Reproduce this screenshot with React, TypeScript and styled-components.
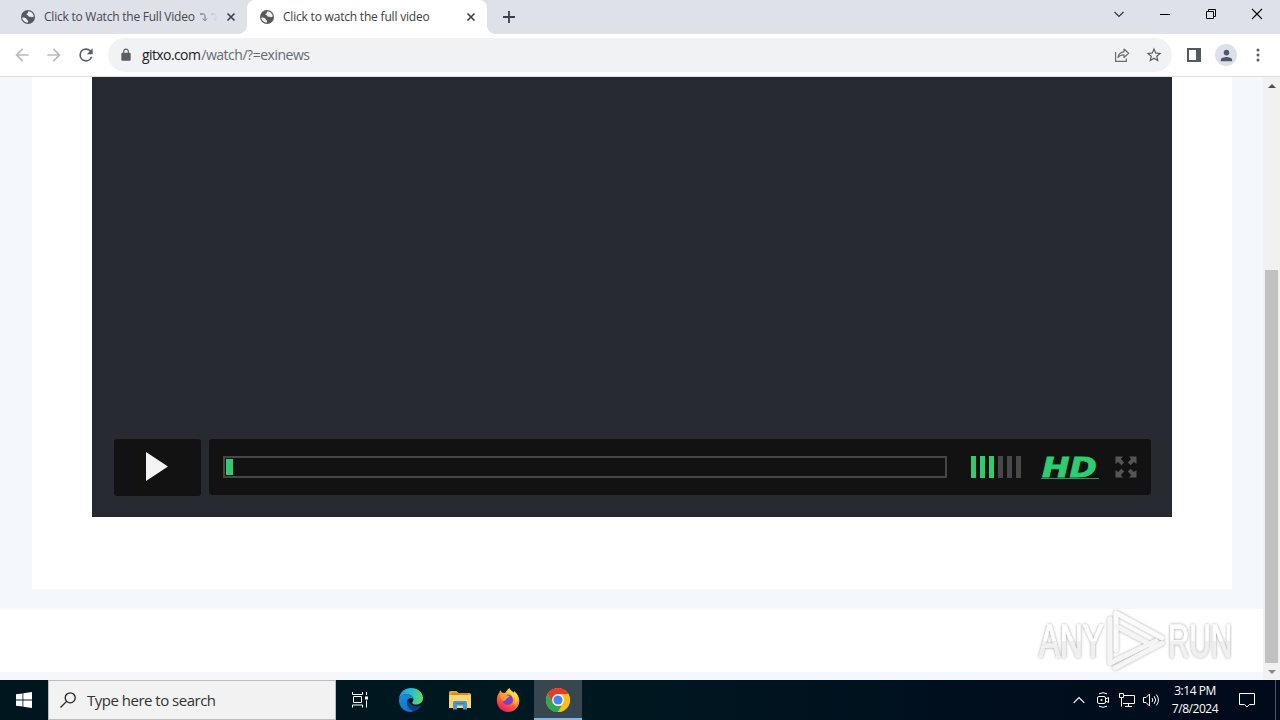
import React from 'react';
import styled, { createGlobalStyle, css } from 'styled-components';

const ui = `"Open Sans", "Noto Sans", sans-serif`;

const GlobalStyle = createGlobalStyle`
  * {
    box-sizing: border-box;
  }
  body {
    margin: 0;
    overflow: hidden;
    background: #ffffff;
    font-family: ${ui};
  }
  svg {
    display: block;
    flex: none;
    overflow: visible;
  }
`;

const Screen = styled.div`
  position: relative;
  display: flex;
  flex-direction: column;
  width: 1280px;
  height: 720px;
  overflow: hidden;
`;

/* Browser chrome */

const TabStrip = styled.div`
  display: flex;
  height: 34px;
  padding-left: 8px;
  background: #dee1e8;
`;

const TabItem = styled.div<{ $active?: boolean }>`
  position: relative;
  display: flex;
  align-items: center;
  width: ${({ $active }) => ($active ? 240 : 239)}px;
  padding: 0 10px 0 12px;
  border-radius: 8px 8px 0 0;
  ${({ $active }) =>
    $active &&
    css`
      background: #ffffff;
      &::before,
      &::after {
        content: '';
        position: absolute;
        bottom: 0;
        width: 8px;
        height: 8px;
      }
      &::before {
        left: -8px;
        background: radial-gradient(circle at 0 0, transparent 7.5px, #ffffff 8px);
      }
      &::after {
        right: -8px;
        background: radial-gradient(circle at 100% 0, transparent 7.5px, #ffffff 8px);
      }
    `}
`;

const TabTitle = styled.div<{ $spacing: number; $color: string }>`
  flex: 1;
  height: 18px;
  margin-left: 8px;
  white-space: nowrap;
  font-size: 12px;
  line-height: 18px;
  letter-spacing: ${({ $spacing }) => $spacing}px;
  color: ${({ $color }) => $color};
`;

const Faded = styled.span`
  display: inline-flex;
  gap: 3px;
  margin-left: 5px;
  vertical-align: -1px;
  -webkit-mask-image: linear-gradient(90deg, #000, rgba(0, 0, 0, 0.4) 55%, transparent 90%);
  mask-image: linear-gradient(90deg, #000, rgba(0, 0, 0, 0.4) 55%, transparent 90%);
`;

const NewTab = styled.div`
  display: flex;
  align-items: center;
  justify-content: center;
  width: 28px;
  margin-left: 8px;
`;

const WindowControls = styled.div`
  display: flex;
  align-items: center;
  margin-left: auto;
  padding-bottom: 6px;
`;

const WindowButton = styled.div`
  display: flex;
  justify-content: center;
  width: 46px;
`;

const Toolbar = styled.div`
  display: flex;
  align-items: center;
  height: 43px;
  padding: 0 6px;
  border-bottom: 1px solid #dcdee0;
  background: #ffffff;
`;

const ToolButton = styled.div`
  display: flex;
  align-items: center;
  justify-content: center;
  width: 32px;
  height: 32px;
`;

const Omnibox = styled.div`
  display: flex;
  flex: 1;
  align-items: center;
  height: 34px;
  margin: 0 6px;
  padding: 0 2px 0 11px;
  border-radius: 17px;
  background: #f0f2f4;
`;

const Url = styled.div`
  flex: 1;
  margin-left: 9px;
  font-size: 14px;
  line-height: 20px;
  letter-spacing: -0.48px;
  color: #666a70;
`;

const Host = styled.span`
  margin-right: 1px;
  letter-spacing: -0.6px;
  color: #202124;
`;

const Avatar = styled.div`
  display: flex;
  align-items: center;
  justify-content: center;
  width: 22px;
  height: 22px;
  border-radius: 50%;
  background: #dde0e9;
`;

/* Page */

const Viewport = styled.div`
  display: flex;
  flex: 1;
  min-height: 0;
`;

const Page = styled.div`
  display: flex;
  flex: 1;
  flex-direction: column;
  min-width: 0;
  background: #f4f8fc;
`;

const Article = styled.div`
  height: 512px;
  margin: 0 31px 20px 32px;
  padding: 0 60px;
  background: #ffffff;
`;

const Band = styled.div`
  height: 63px;
  background: #ffffff;
`;

const Player = styled.div`
  display: flex;
  align-items: flex-end;
  gap: 8px;
  height: 440px;
  padding: 0 21px 21px 22px;
  background: #272a31;
`;

const PlayButton = styled.div`
  display: flex;
  flex: none;
  align-items: center;
  justify-content: center;
  width: 87px;
  height: 57px;
  padding: 0 2px 3px 0;
  border-radius: 3px;
  background: #121212;
`;

const Controls = styled.div`
  display: flex;
  flex: 1;
  align-items: center;
  height: 56px;
  margin-bottom: 1px;
  padding: 0 14px;
  border-radius: 3px;
  background: #121212;
`;

const Track = styled.div`
  flex: none;
  width: 724px;
  height: 22px;
  padding: 1px;
  border: 2px solid #464646;
`;

const Progress = styled.div`
  width: 7px;
  height: 16px;
  background: #2fcc71;
`;

const Volume = styled.div`
  display: flex;
  justify-content: space-between;
  width: 50px;
  margin-left: 24px;
`;

const Level = styled.div<{ $on: boolean }>`
  width: 5px;
  height: 22px;
  background: ${({ $on }) => ($on ? '#2fcc71' : '#484848')};
`;

const Quality = styled.div`
  display: flex;
  justify-content: center;
  width: 58px;
  height: 24px;
  margin: 0 16px 0 20px;
  border-bottom: 1px solid #279a58;
`;

/* Scrollbar */

const Scrollbar = styled.div`
  display: flex;
  flex: none;
  flex-direction: column;
  align-items: center;
  width: 17px;
  background: #f1f1f1;
`;

const ScrollArrow = styled.div`
  display: flex;
  align-items: center;
  justify-content: center;
  height: 17px;
`;

const Thumb = styled.div`
  width: 13px;
  height: 393px;
  margin-top: 176px;
  background: #c1c1c1;
`;

/* Taskbar */

const Taskbar = styled.div`
  display: flex;
  height: 40px;
  background: linear-gradient(90deg, #00161e 0%, #001820 45%, #000f1e 75%, #010a1a 100%);
`;

const TaskButton = styled.div<{ $width: number; $active?: boolean }>`
  display: flex;
  align-items: center;
  justify-content: center;
  width: ${({ $width }) => $width}px;
  ${({ $active }) =>
    $active &&
    css`
      margin-left: 1px;
      background: #37464f;
      box-shadow: inset 0 -2px #76b9ed;
    `}
`;

const Search = styled.div`
  display: flex;
  align-items: center;
  width: 288px;
  padding-left: 11px;
  border: 1px solid #bcbcbc;
  background: #f2f2f2;
`;

const SearchText = styled.div`
  margin-left: 11px;
  font-size: 15px;
  line-height: 20px;
  letter-spacing: -0.5px;
  color: #333333;
`;

const Tray = styled.div`
  display: flex;
  margin-left: auto;
`;

const TrayIcon = styled.div`
  display: flex;
  align-items: center;
  justify-content: center;
  width: 24px;
`;

const Clock = styled.div`
  display: flex;
  flex-direction: column;
  justify-content: center;
  width: 64px;
  padding-bottom: 1px;
  font-size: 12px;
  line-height: 18px;
  letter-spacing: -0.45px;
  text-align: center;
  color: #ffffff;
`;

const Notifications = styled.div`
  display: flex;
  align-items: center;
  justify-content: center;
  width: 40px;
  margin-right: 8px;
`;

const ShowDesktop = styled.div`
  width: 5px;
  border-left: 1px solid #4b5563;
`;

const Watermark = styled.div`
  position: absolute;
  top: 605px;
  left: 1032px;
`;

const GlobeIcon = () => (
  <svg width="16" height="16" viewBox="0 0 16 16">
    <circle cx="8" cy="8" r="7" fill="#55585d" />
    <path d="M2.2 8.6c1.8-.1 3.2.2 4 .9.8.6.3 1.5 1.3 1.7.9.2.7 1.3 0 2.5C4.7 13.5 2.4 11.3 2.2 8.6z" fill="#f0f1f4" />
    <path d="M8.5 2.200c2.7.2 4.9 2.300 5.300 5-.8.9-1.700 1.200-2.400.8-.9-.5-1.500.1-2.500-.4-.9-.5-.6-1.400-1.700-1.600-1-.2-.9-1.100 0-1.400 1-.3.4-1.700 1.300-2.400z" fill="#f0f1f4" />
  </svg>
);

const CloseIcon = () => (
  <svg width="12" height="12" viewBox="0 0 12 12">
    <path d="M2.500 2.500l7 7M9.500 2.500l-7 7" stroke="#3f4247" strokeWidth="1.7" />
  </svg>
);

const DownTurn = () => (
  <svg width="8" height="9" viewBox="0 0 8 9" fill="none" stroke="#4a4d52">
    <path d="M0 1h3.500q1.500 0 1.500 1.500v5M2.800 5.500L5 7.800l2.200-2.300" />
  </svg>
);

const Material = ({ d, size = 20, fill = '#5a5d62' }: { d: string; size?: number; fill?: string }) => (
  <svg width={size} height={size} viewBox="0 0 24 24" fill={fill}>
    <path d={d} />
  </svg>
);

const BACK = 'M20 11H7.830l5.590-5.590L12 4l-8 8 8 8 1.410-1.410L7.830 13H20v-2z';
const FORWARD = 'M12 4l-1.410 1.410L16.170 11H4v2h12.170l-5.580 5.590L12 20l8-8z';
const RELOAD =
  'M17.650 6.350A7.958 7.958 0 0 0 12 4a8 8 0 1 0 7.730 10h-2.080A6 6 0 1 1 12 6c1.660 0 3.140.690 4.220 1.780L13 11h7V4l-2.350 2.350z';
const LOCK =
  'M18 8h-1V6c0-2.760-2.240-5-5-5S7 3.240 7 6v2H6c-1.100 0-2 .9-2 2v10c0 1.100.9 2 2 2h12c1.100 0 2-.9 2-2V10c0-1.100-.9-2-2-2zM9 6c0-1.660 1.340-3 3-3s3 1.340 3 3v2H9V6z';
const STAR =
  'M22 9.240l-7.190-.62L12 2 9.190 8.630 2 9.240l5.460 4.730L5.820 21 12 17.270 18.180 21l-1.630-7.030L22 9.240zM12 15.400l-3.760 2.270 1-4.280-3.320-2.880 4.380-.38L12 6.100l1.710 4.040 4.380.38-3.320 2.880 1 4.280L12 15.400z';
const PERSON =
  'M12 12c2.210 0 4-1.790 4-4s-1.790-4-4-4-4 1.790-4 4 1.790 4 4 4zm0 2c-2.670 0-8 1.340-8 4v2h16v-2c0-2.660-5.330-4-8-4z';

const ShareIcon = () => (
  <svg width="16" height="16" viewBox="0 0 16 16" fill="none" stroke="#6a6d72" strokeWidth="1.2">
    <path d="M1.600 5v9.400h10.800v-3" />
    <path d="M4 10.500C4.400 7 6.500 5 10 4.800V2l4.600 4.300L10 10.500V7.800C7.300 7.700 5.500 8.500 4 10.500z" strokeLinejoin="round" />
  </svg>
);

const SidePanelIcon = () => (
  <svg width="14" height="14" viewBox="0 0 14 14">
    <path d="M0 0h14v14H0zM2 2v10h7V2z" fill="#55585d" fillRule="evenodd" />
  </svg>
);

const ExpandIcon = () => (
  <svg width="22" height="22" viewBox="0 0 22 22" fill="#555555">
    {[0, 90, 180, 270].map((angle) => (
      <path key={angle} transform={`rotate(${angle} 11 11)`} d="M.5.500h7.500L5.900 3.100l3.300 3.300-2.800 2.800-3.300-3.300L.5 8z" />
    ))}
  </svg>
);

const EdgeIcon = () => (
  <svg width="24" height="24" viewBox="0 0 24 24">
    <defs>
      <linearGradient id="edgeTop" x1="0" y1="0.4" x2="1" y2="0.5">
        <stop offset="0" stopColor="#1c9de0" />
        <stop offset="0.55" stopColor="#2bc3c5" />
        <stop offset="1" stopColor="#66d85c" />
      </linearGradient>
      <linearGradient id="edgeLow" x1="0" y1="0" x2="0.6" y2="1">
        <stop offset="0" stopColor="#1895dc" />
        <stop offset="1" stopColor="#1470c4" />
      </linearGradient>
    </defs>
    <path d="M0 11C.5 4.500 5.500 0 12 0c7 0 12 4.600 12 10 0 4-3 6.500-6.800 6.500-2.700 0-4-1-4-1.800 0-.8 1.200-1.100 1.200-3.200 0-2.800-3-5.300-6.700-5.300C4.200 6.200 1.200 8 0 11z" fill="url(#edgeTop)" />
    <path d="M0 11.500C1 8 4.200 6.200 7.700 6.200c3.700 0 6.600 2.300 6.700 5-1.200-1.400-3.400-1.600-4.900-.4C6.500 13.300 8.600 20 15 22.800c-1 .8-2.100 1.200-3.500 1.200C5 24-.3 18.500 0 11.500z" fill="url(#edgeLow)" />
    <path d="M9 11.300c-3 3.500-.2 10.500 6.200 11.900 3-.8 5.300-2.700 6.800-5.200.3-.5-.1-.8-.6-.5-4.500 2.400-10.800.4-12.400-6.200z" fill="#123f83" />
  </svg>
);

const FolderIcon = () => (
  <svg width="22" height="20" viewBox="0 0 22 20">
    <path d="M0 2.500Q0 1 1.500 1h6l2 2H20.500Q22 3 22 4.500V7H0z" fill="#e5a52c" />
    <path d="M2.500 3h16v4h-16z" fill="#d98c20" />
    <path d="M0 5h22v13H0z" fill="#fbd56e" />
    <path d="M4 19.500v-7Q4 11 5.500 11h11q1.500 0 1.500 1.500v7h-4V15.500H8v4z" fill="#4a98cf" />
    <path d="M6.500 13h9v1h-9z" fill="#3580b8" />
  </svg>
);

const FirefoxIcon = () => (
  <svg width="24" height="24" viewBox="0 0 24 24">
    <defs>
      <linearGradient id="foxFlame" x1="0.8" y1="0" x2="0.25" y2="1">
        <stop offset="0" stopColor="#fff04a" />
        <stop offset="0.35" stopColor="#ffb02a" />
        <stop offset="0.65" stopColor="#ff5638" />
        <stop offset="1" stopColor="#e3156c" />
      </linearGradient>
    </defs>
    <path d="M.8 12.500C.8 8.500 2 6 3.500 4.500L4 2l2.200 2.800q1.500-.3 2.800.2C10.300 4 10.500 2.200 13.500 0c.8 2.200 3 3.300 4.500 5V3c3.300 2.200 5.300 6 5.300 9.700C23.300 19 18.300 24 12 24S.8 19 .8 12.500z" fill="url(#foxFlame)" />
    <circle cx="11.8" cy="11.7" r="5.2" fill="#7542d6" />
    <path d="M4 7c2-1.800 5-1.500 6.800.3l2.700.8c-.2 1.500-2.500 1.600-3 2.600-.2 1.400-2 1.500-2.700 2.600C5.500 12 4 10 4 7z" fill="#ff9b2b" />
    <path d="M12.500 2.500c.5 3 4.500 4 4.700 8.500.8-.8.800-2.300.4-3.500C20 10 20 14 17.500 16.500c4.500-2 5-8 1.500-11.200z" fill="#ffd83d" />
  </svg>
);

const ChromeIcon = () => (
  <svg width="24" height="24" viewBox="0 0 24 24">
    <circle cx="12" cy="12" r="12" fill="#fbc116" />
    <path d="M12 12L6.800 15 1.610 6A12 12 0 0 1 22.390 6H12z" fill="#e33b2e" />
    <path d="M1.610 6L6.800 15A6 6 0 0 0 12 18h5.200L12 24A12 12 0 0 1 1.610 6z" fill="#2da94f" />
    <path d="M17.200 15L12 24A12 12 0 0 0 22.390 6H12z" fill="#fbc116" />
    <circle cx="12" cy="12" r="5.900" fill="#ffffff" />
    <circle cx="12" cy="12" r="4.600" fill="#4285f4" />
  </svg>
);

const TaskViewIcon = () => (
  <svg width="18" height="18" viewBox="0 0 18 18" fill="none" stroke="#ffffff">
    <path d="M1.500 1v2.500h10V1M1.500 16.500V14h10v2.500M2.500 5.500h8v6h-8zM15.500 1v3M15.500 9.500v7" />
    <path d="M14 5.500h3v3h-3z" fill="#ffffff" stroke="none" />
  </svg>
);

const CameraIcon = () => (
  <svg width="14" height="18" viewBox="0 0 14 18" fill="none" stroke="#ffffff">
    <path d="M3 2.800Q7 .6 11 2.800M3 15.200q4 2.200 8 0" />
    <rect x="1.500" y="5.500" width="8" height="7" rx="1.500" />
    <path d="M9.500 8l3-1.500v5l-3-1.500" />
    <circle cx="5.500" cy="9" r="1" fill="#ffffff" stroke="none" />
  </svg>
);

const NetworkIcon = () => (
  <svg width="18" height="16" viewBox="0 0 18 16" fill="none" stroke="#ffffff">
    <path d="M6 3.500h10.500v8H5M10.500 11.500v3M7 14.500h7M1.500 1.500h4v4h-4zM3.500 5.500v9" />
  </svg>
);

const SpeakerIcon = () => (
  <svg width="18" height="16" viewBox="0 0 18 16" fill="none" stroke="#ffffff">
    <path d="M1.500 5.500H4l3.500-3.500v12L4 10.500H1.500zM10 6q1.500 2 0 4M12.200 4.200q3 3.800 0 7.600M14.300 2.500q4.300 5.500 0 11" />
  </svg>
);

const AnyRunLogo = () => (
  <svg width="208" height="70" viewBox="0 0 208 70">
    <defs>
      <linearGradient id="markFill" x1="0" y1="0" x2="0" y2="1">
        <stop offset="0.5" stopColor="#ffffff" />
        <stop offset="0.52" stopColor="#f0f0f0" />
      </linearGradient>
      <filter id="markShadow" x="-10%" y="-10%" width="120%" height="120%">
        <feDropShadow dx="0" dy="0" stdDeviation="1.5" floodColor="#000000" floodOpacity="0.42" />
      </filter>
    </defs>
    <g filter="url(#markShadow)">
      <g
        fill="url(#markFill)"
        stroke="url(#markFill)"
        strokeWidth="0.8"
        fontFamily='"Liberation Sans", sans-serif'
        fontSize="47"
      >
        <text transform="translate(7 52) scale(0.67 1)">ANY</text>
        <text transform="translate(136 52) scale(0.63 1)">RUN</text>
      </g>
      <g fill="none" stroke="#fbfbfb" strokeWidth="4.5" strokeLinejoin="round" strokeLinecap="round">
        <path d="M84 45V8l46 25" />
        <path d="M78 14V58l46-22" stroke="#f5f5f5" />
        <path d="M84 21l37 20M83 63l47-25" stroke="#f5f5f5" />
      </g>
    </g>
  </svg>
);

const levels = [true, true, true, false, false, false];

export default function App() {
  return (
    <>
      <GlobalStyle />
      <Screen>
        <TabStrip>
          <TabItem>
            <GlobeIcon />
            <TabTitle $spacing={-0.23} $color="#45484d">
              Click to Watch the Full Video
              <Faded>
                <DownTurn />
                <DownTurn />
              </Faded>
            </TabTitle>
            <CloseIcon />
          </TabItem>
          <TabItem $active>
            <GlobeIcon />
            <TabTitle $spacing={-0.2} $color="#3c4043">
              Click to watch the full video
            </TabTitle>
            <CloseIcon />
          </TabItem>
          <NewTab>
            <svg width="12" height="12" viewBox="0 0 12 12">
              <path d="M6 0v12M0 6h12" stroke="#3c4043" strokeWidth="1.8" />
            </svg>
          </NewTab>
          <WindowControls>
            <WindowButton>
              <svg width="12" height="12" viewBox="0 0 12 12" fill="none" stroke="#333333">
                <path d="M1.500 4L6 8.500 10.500 4" strokeWidth="1.2" />
              </svg>
            </WindowButton>
            <WindowButton>
              <svg width="10" height="10" viewBox="0 0 10 10">
                <path d="M0 5.500h10" stroke="#000000" />
              </svg>
            </WindowButton>
            <WindowButton>
              <svg width="10" height="10" viewBox="0 0 10 10" fill="none" stroke="#000000">
                <path d="M.5 2.500h7v7h-7zM2.500 2.500v-2h7v7h-2" />
              </svg>
            </WindowButton>
            <WindowButton>
              <svg width="10" height="10" viewBox="0 0 10 10">
                <path d="M0 0l10 10M10 0L0 10" stroke="#000000" strokeWidth="1.1" />
              </svg>
            </WindowButton>
          </WindowControls>
        </TabStrip>

        <Toolbar>
          <ToolButton>
            <Material d={BACK} fill="#b9bbbe" />
          </ToolButton>
          <ToolButton>
            <Material d={FORWARD} fill="#b9bbbe" />
          </ToolButton>
          <ToolButton>
            <Material d={RELOAD} />
          </ToolButton>
          <Omnibox>
            <Material d={LOCK} size={14} />
            <Url>
              <Host>gitxo.com</Host>/watch/?=exinews
            </Url>
            <ToolButton>
              <ShareIcon />
            </ToolButton>
            <ToolButton>
              <Material d={STAR} size={18} />
            </ToolButton>
          </Omnibox>
          <ToolButton>
            <SidePanelIcon />
          </ToolButton>
          <ToolButton>
            <Avatar>
              <Material d={PERSON} size={17} fill="#50566b" />
            </Avatar>
          </ToolButton>
          <ToolButton>
            <svg width="4" height="14" viewBox="0 0 4 14" fill="#5a5d62">
              <circle cx="2" cy="2" r="1.5" />
              <circle cx="2" cy="7" r="1.5" />
              <circle cx="2" cy="12" r="1.5" />
            </svg>
          </ToolButton>
        </Toolbar>

        <Viewport>
          <Page>
            <Article>
              <Player>
                <PlayButton>
                  <svg width="22" height="29" viewBox="0 0 22 29">
                    <path d="M0 0l22 14.500L0 29z" fill="#f4f4f4" />
                  </svg>
                </PlayButton>
                <Controls>
                  <Track>
                    <Progress />
                  </Track>
                  <Volume>
                    {levels.map((on, i) => (
                      <Level key={i} $on={on} />
                    ))}
                  </Volume>
                  <Quality>
                    <svg width="56" height="22" viewBox="0 0 56 22">
                      <text
                        transform="translate(0 21.5) scale(1.22 1)"
                        fill="#2fcc71"
                        stroke="#2fcc71"
                        strokeWidth="0.8"
                        fontFamily='"DejaVu Sans", sans-serif'
                        fontSize="27"
                        fontStyle="italic"
                        fontWeight="bold"
                      >
                        HD
                      </text>
                    </svg>
                  </Quality>
                  <ExpandIcon />
                </Controls>
              </Player>
            </Article>
            <Band />
          </Page>
          <Scrollbar>
            <ScrollArrow>
              <svg width="8" height="4" viewBox="0 0 8 4">
                <path d="M4 0l4 4H0z" fill="#505050" />
              </svg>
            </ScrollArrow>
            <Thumb />
            <ScrollArrow>
              <svg width="8" height="4" viewBox="0 0 8 4">
                <path d="M0 0h8L4 4z" fill="#8a8a8a" />
              </svg>
            </ScrollArrow>
          </Scrollbar>
        </Viewport>

        <Taskbar>
          <TaskButton $width={48}>
            <svg width="16" height="16" viewBox="0 0 16 16" fill="#ffffff">
              <path d="M0 2.300L6.500 1.400v6.200H0zM7.300 1.300L16 0v7.600H7.300zM0 8.400h6.500v6.200L0 13.700zM7.300 8.400H16V16l-8.700-1.300z" />
            </svg>
          </TaskButton>
          <Search>
            <svg width="16" height="16" viewBox="0 0 16 16" fill="none" stroke="#222222" strokeWidth="1.3">
              <circle cx="10.2" cy="5.8" r="5" />
              <path d="M6.600 9.400L.5 15.500" />
            </svg>
            <SearchText>Type here to search</SearchText>
          </Search>
          <TaskButton $width={48}>
            <TaskViewIcon />
          </TaskButton>
          <TaskButton $width={54}>
            <EdgeIcon />
          </TaskButton>
          <TaskButton $width={44}>
            <FolderIcon />
          </TaskButton>
          <TaskButton $width={51}>
            <FirefoxIcon />
          </TaskButton>
          <TaskButton $width={48} $active>
            <ChromeIcon />
          </TaskButton>
          <Tray>
            <TrayIcon>
              <svg width="12" height="8" viewBox="0 0 12 8" fill="none" stroke="#ffffff" strokeWidth="1.2">
                <path d="M.7 6.800L6 1.500l5.300 5.300" />
              </svg>
            </TrayIcon>
            <TrayIcon>
              <CameraIcon />
            </TrayIcon>
            <TrayIcon>
              <NetworkIcon />
            </TrayIcon>
            <TrayIcon>
              <SpeakerIcon />
            </TrayIcon>
            <Clock>
              <span>3:14 PM</span>
              <span>7/8/2024</span>
            </Clock>
            <Notifications>
              <svg width="16" height="16" viewBox="0 0 16 16" fill="none" stroke="#ffffff">
                <path d="M.5 1.500h15v11h-5L8 15l-2.500-2.500h-5z" />
              </svg>
            </Notifications>
            <ShowDesktop />
          </Tray>
        </Taskbar>
        <Watermark>
          <AnyRunLogo />
        </Watermark>
      </Screen>
    </>
  );
}
